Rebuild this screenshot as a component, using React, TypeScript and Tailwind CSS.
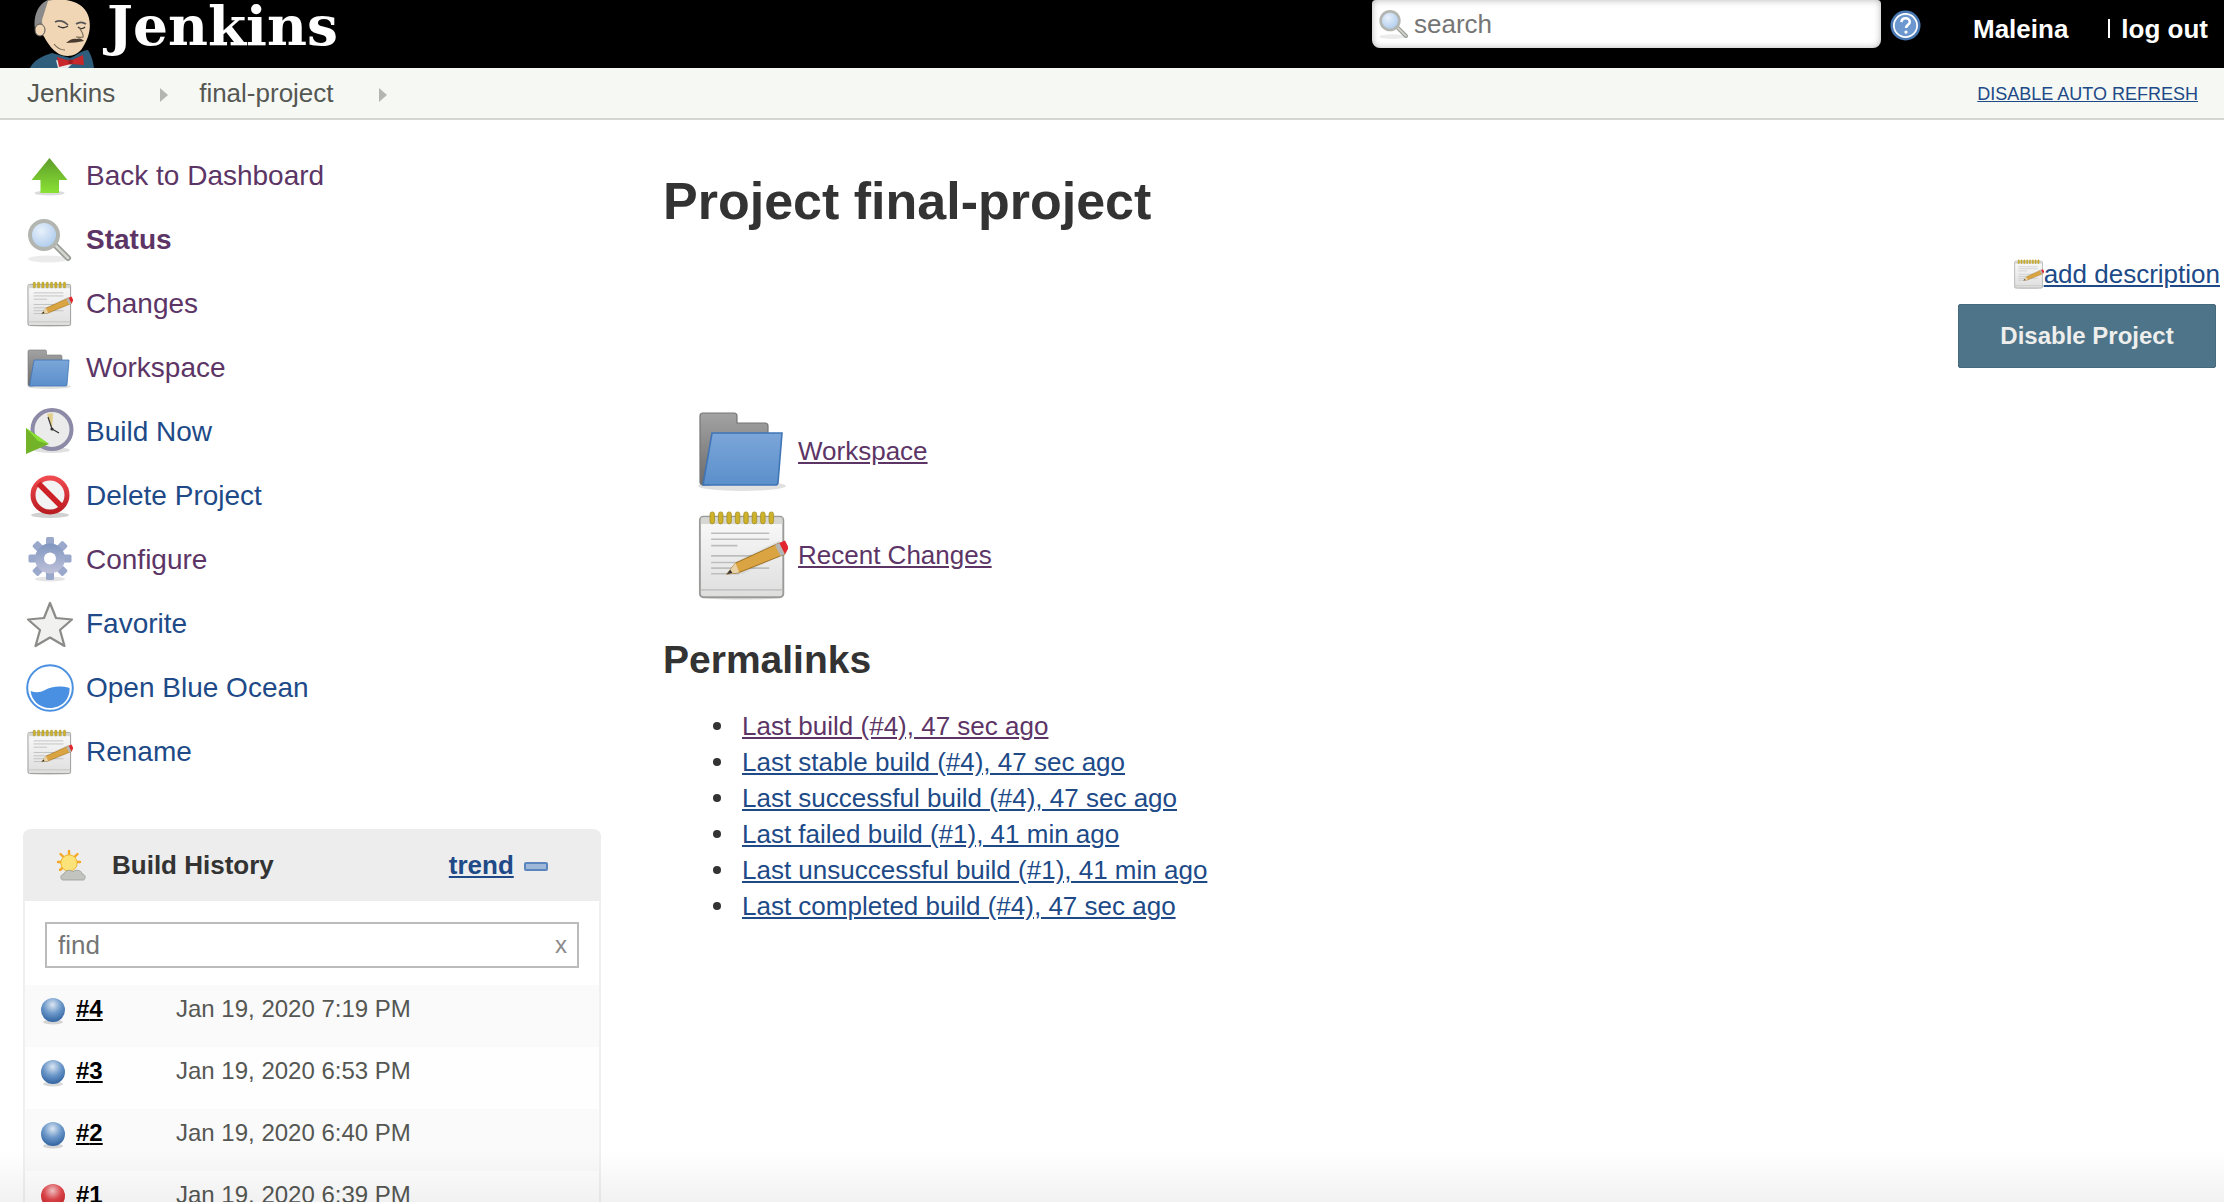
import type { ReactNode } from 'react'

const PURPLE = 'text-[#5c3566]'
const BLUE = 'text-[#204a87]'

function JenkinsHead() {
  return (
    <svg viewBox="0 0 66 68" className="w-[66px] h-[68px] shrink-0">
      <path d="M2 68C6 60 14 56 24 53L42 58C48 56 54 50 60 50C64 56 65 62 66 68Z" fill="#2f5d7c" />
      <path d="M28 60L44 64L40 68H30Z" fill="#e8e8e8" />
      <path d="M8 34C4 20 8 5 20 0H34C25 4 21 12 19 21L17 35Z" fill="#8a8a8a" />
      <path d="M20 1C35-3 55 1 60 15C64 26 61 38 55 47C50 56 39 58 31 54C23 49 19 42 15 35L14 20Z" fill="#f0d6b5" />
      <ellipse cx="12" cy="30" rx="5" ry="6" fill="#f0d6b5" stroke="#555" strokeWidth="1" />
      <path d="M27 22C31 20 36 21 40 25M48 24C51 22 55 22 58 24" stroke="#555" strokeWidth="1.6" fill="none" />
      <path d="M30 26C33 28 37 28 40 26M50 27C52 29 55 29 57 27" stroke="#333" strokeWidth="1.4" fill="none" />
      <path d="M51 27C53 31 56 34 55 37C53 38 50 37 48 37" stroke="#7a6a58" strokeWidth="1.2" fill="none" />
      <path d="M38 43C42 39 46 38 49 39C52 38 54 39 56 41C51 42 44 43 38 43Z" fill="#4a3b30" />
      <path d="M26 44C29 48 33 50 37 50" stroke="#7a6a58" strokeWidth="1.2" fill="none" />
      <path d="M29 57L42 61L55 55L56 65L43 64L31 67Z" fill="#c8272b" />
      <circle cx="42.5" cy="62" r="2.4" fill="#a01c20" />
    </svg>
  )
}

function ArrowUpIcon() {
  return (
    <svg viewBox="0 0 48 48" className="w-12 h-12 shrink-0">
      <defs>
        <linearGradient id="arrowG" x1="0" y1="0" x2="0" y2="1">
          <stop offset="0" stopColor="#5d9c2a" />
          <stop offset="1" stopColor="#8ae234" />
        </linearGradient>
      </defs>
      <ellipse cx="23.5" cy="41" rx="15" ry="2.5" fill="#000" opacity="0.14" />
      <path d="M23.5 6L41.5 28H33V41H14.5V28H5.5Z" fill="url(#arrowG)" />
    </svg>
  )
}

function SearchIcon({ className = 'w-12 h-12' }: { className?: string }) {
  return (
    <svg viewBox="0 0 48 48" className={`${className} shrink-0`}>
      <defs>
        <radialGradient id="lensG" cx="0.4" cy="0.35" r="0.7">
          <stop offset="0" stopColor="#e8f1fb" />
          <stop offset="1" stopColor="#a9c8ec" />
        </radialGradient>
      </defs>
      <ellipse cx="22" cy="43" rx="20" ry="3.5" fill="#000" opacity="0.08" />
      <path d="M29 29L42 42" stroke="#9a9c97" strokeWidth="6" strokeLinecap="round" />
      <path d="M29 29L42 42" stroke="#d3d7cf" strokeWidth="2.5" strokeLinecap="round" />
      <circle cx="18" cy="19" r="14" fill="url(#lensG)" stroke="#b3b6b0" strokeWidth="4" />
    </svg>
  )
}

function NotepadIcon({ className = 'w-12 h-12' }: { className?: string }) {
  return (
    <svg viewBox="0 0 48 48" className={`${className} shrink-0`}>
      <defs>
        <linearGradient id="padG" x1="0" y1="0" x2="0" y2="1">
          <stop offset="0" stopColor="#fafafa" />
          <stop offset="1" stopColor="#dedede" />
        </linearGradient>
      </defs>
      <ellipse cx="23" cy="46.5" rx="20" ry="1.4" fill="#000" opacity="0.12" />
      <rect x="1" y="3.5" width="44.5" height="43" rx="1.8" fill="url(#padG)" stroke="#9a9a98" strokeWidth="1" />
      <rect x="1.5" y="4" width="43.5" height="3.5" fill="#d6d6d3" />
      <path d="M1.5 42.6H45" stroke="#c4c4c2" strokeWidth="1" />
      {[7.6, 12.1, 16.6, 21.1, 25.6, 30.1, 34.6, 39.1].map((x) => (
        <rect key={x} x={x - 1.2} y="1" width="2.4" height="6.4" rx="1.2" fill="#cdb22a" stroke="#9c8718" strokeWidth="0.35" />
      ))}
      <path d="M7 12.4H38M7 15.6H38M7 19H21M7 24.5H38M7 28H25M7 31H38M7 34H22" stroke="#bcbebb" strokeWidth="0.9" />
      <path d="M15.3 34.2L21 27L43 16.5L48 22.5L24 34Z" fill="#000" opacity="0.07" />
      <path d="M15.3 34.2L20 28.3L43.5 17.5L46.5 23.5L22 33.3Z" fill="#d9a441" stroke="#8f5902" strokeWidth="0.4" />
      <path d="M15.3 34.2L20 28.3L22 33.3Z" fill="#e9d2a6" />
      <path d="M15.3 34.2L17.2 31.8L18.4 33.6Z" fill="#333" />
      <path d="M43 17.7L46.4 16.2L48.4 20.2L46.4 23.5Z" fill="#e3262e" />
      <path d="M41 18.7L43.4 17.6L46.3 23.6L44 24.5Z" fill="#b5b5b5" />
    </svg>
  )
}

function FolderIcon({ className = 'w-12 h-12' }: { className?: string }) {
  return (
    <svg viewBox="0 0 48 48" className={`${className} shrink-0`}>
      <defs>
        <linearGradient id="folderBack" x1="0" y1="0" x2="0" y2="1">
          <stop offset="0" stopColor="#a3a3a3" />
          <stop offset="1" stopColor="#6b6b6b" />
        </linearGradient>
        <linearGradient id="folderFront" x1="0" y1="0" x2="0" y2="1">
          <stop offset="0" stopColor="#7ba6d9" />
          <stop offset="1" stopColor="#5b8fcb" />
        </linearGradient>
      </defs>
      <ellipse cx="23" cy="42.5" rx="22" ry="2.5" fill="#000" opacity="0.12" />
      <path d="M2 7.5C2 6.6 2.6 6 3.5 6H19C20 6 20.5 6.6 20.5 7.5V11H34.5C35.4 11 36 11.6 36 12.5V17L7 42H3.5C2.6 42 2 41.4 2 40.5Z" fill="url(#folderBack)" stroke="#757575" strokeWidth="0.6" />
      <path d="M8 16H43L41 40.8C40.9 41.6 40.4 42 39.6 42H3.5Z" fill="url(#folderFront)" stroke="#3f75b5" strokeWidth="0.8" />
    </svg>
  )
}

function BuildNowIcon() {
  return (
    <svg viewBox="0 0 48 48" className="w-12 h-12 shrink-0">
      <ellipse cx="26" cy="42" rx="18" ry="3" fill="#000" opacity="0.12" />
      <circle cx="26" cy="21.5" r="19.5" fill="#ebebeb" stroke="#8c8aa6" strokeWidth="4" />
      <path d="M26 21L21 6L27 5Z" fill="#e2cf8a" />
      <path d="M26 21L22 9M26 21L33 25" stroke="#333" strokeWidth="1.2" />
      <circle cx="26" cy="21" r="1.6" fill="#333" />
      <path d="M0 20L23 36L0 46Z" fill="#73b32a" />
      <path d="M0 20L23 36L12 33Z" fill="#8ae234" />
    </svg>
  )
}

function DeleteIcon() {
  return (
    <svg viewBox="0 0 48 48" className="w-12 h-12 shrink-0">
      <defs>
        <linearGradient id="deleteG" x1="0" y1="0" x2="0" y2="1">
          <stop offset="0" stopColor="#ef4a4f" />
          <stop offset="1" stopColor="#b91d22" />
        </linearGradient>
      </defs>
      <ellipse cx="24" cy="43" rx="19" ry="3" fill="#000" opacity="0.18" />
      <circle cx="24" cy="23" r="17" fill="#f3f3f3" stroke="url(#deleteG)" strokeWidth="5" />
      <path d="M12.5 11.5L35.5 34.5" stroke="#cc2227" strokeWidth="5.5" />
    </svg>
  )
}

function GearIcon() {
  const teeth = [0, 45, 90, 135, 180, 225, 270, 315]
  return (
    <svg viewBox="0 0 48 48" className="w-12 h-12 shrink-0">
      <defs>
        <linearGradient id="gearG" x1="0" y1="0" x2="0" y2="1">
          <stop offset="0" stopColor="#7f96bf" />
          <stop offset="1" stopColor="#c0c2da" />
        </linearGradient>
      </defs>
      <ellipse cx="24" cy="43" rx="15" ry="2.5" fill="#000" opacity="0.1" />
      <g>
        {teeth.map((a) => (
          <rect key={a} x="20" y="1" width="8" height="12" rx="1.5" transform={`rotate(${a} 24 22.5)`} fill="#9aa8cb" />
        ))}
      </g>
      <circle cx="24" cy="22.5" r="15" fill="url(#gearG)" />
      <circle cx="24" cy="22.5" r="6" fill="#fff" />
    </svg>
  )
}

function StarIcon() {
  return (
    <svg viewBox="0 0 48 48" className="w-12 h-12 shrink-0">
      <path d="M24 3L30 18L46 19.5L34 30L38.5 46L24 37.5L9.5 46L14 30L2 19.5L18 18Z" fill="#f1f1ef" stroke="#8a8a88" strokeWidth="2.2" strokeLinejoin="round" />
    </svg>
  )
}

function OceanIcon() {
  return (
    <svg viewBox="0 0 48 48" className="w-12 h-12 shrink-0">
      <circle cx="24" cy="24" r="22.8" fill="#fff" stroke="#4a90e2" strokeWidth="2" />
      <path d="M4.6 27C10 29 14 28.5 19 26C25 23 33 21 43.6 24C44 35 36 44 24 44C13 44 5.5 36 4.6 27Z" fill="#4a90e2" />
    </svg>
  )
}

function Ball({ color }: { color: 'blue' | 'red' }) {
  const id = `ball-${color}`
  return (
    <svg viewBox="0 0 26 28" className="w-[26px] h-[28px] shrink-0 mt-[2px]">
      <defs>
        <radialGradient id={id} cx="0.48" cy="0.28" r="0.75">
          <stop offset="0" stopColor={color === 'blue' ? '#dbe6f2' : '#f7c7c9'} />
          <stop offset="0.5" stopColor={color === 'blue' ? '#6b97c9' : '#e2474c'} />
          <stop offset="1" stopColor={color === 'blue' ? '#2c5f9e' : '#c41f24'} />
        </radialGradient>
      </defs>
      <ellipse cx="13" cy="25" rx="10" ry="2.5" fill="#000" opacity="0.15" />
      <circle cx="13" cy="13" r="12" fill={`url(#${id})`} />
    </svg>
  )
}

function SunCloudIcon() {
  return (
    <svg viewBox="0 0 32 32" className="w-8 h-8 shrink-0">
      <g stroke="#f5a623" strokeWidth="2.4" strokeLinecap="round">
        <path d="M14 2V7M3 13H7M5.5 5L9 8.5M22.5 5L19 8.5M25 13H21M5 21L8.5 18" />
      </g>
      <circle cx="14" cy="14" r="8.2" fill="#fbe37a" stroke="#f0b429" strokeWidth="1" />
      <path d="M8 31C5 31 5 25 9 25C10 21 16 20 18 23C20 20 27 21 27 25C31 25 31 31 28 31Z" fill="#c2c4c0" stroke="#9a9c98" strokeWidth="0.8" />
    </svg>
  )
}

function HelpIcon() {
  return (
    <svg viewBox="0 0 32 32" className="w-[31px] h-[31px] shrink-0">
      <circle cx="16" cy="16" r="15.5" fill="#4a78b5" />
      <circle cx="16" cy="16" r="12" fill="#6d98cf" stroke="#fff" strokeWidth="1.8" />
      <path d="M11.8 12.5C12 9.8 14 8.6 16.2 8.6C18.6 8.6 20.4 10.2 20.4 12.3C20.4 15.2 16.6 15.4 16.6 18.6" stroke="#fff" strokeWidth="2.6" fill="none" />
      <circle cx="16.5" cy="22.8" r="1.7" fill="#fff" />
    </svg>
  )
}

function Crumb({ label, gap }: { label: string; gap: string }) {
  return (
    <>
      <span className="text-[26px] leading-[30px] text-[#555753]">{label}</span>
      <span className={`ml-[45px] ${gap} mt-[4px] w-0 h-0 border-y-[7px] border-y-transparent border-l-[8px] border-l-[#b4b6b2]`} />
    </>
  )
}

function TaskRow({ icon, label, color, bold }: { icon: ReactNode; label: string; color: string; bold?: boolean }) {
  return (
    <div className="flex items-center h-16">
      {icon}
      <a className={`ml-[12px] text-[28px] leading-8 ${color} ${bold ? 'font-bold' : ''}`}>{label}</a>
    </div>
  )
}

function HistoryRow({ no, date, color, odd }: { no: number; date: string; color: 'blue' | 'red'; odd: boolean }) {
  return (
    <div className={`flex items-start h-[62px] pl-[15px] pt-[10px] shrink-0 ${odd ? 'bg-[#fafafa]' : 'bg-[#fefefe]'}`}>
      <Ball color={color} />
      <a className="ml-[10px] w-[100px] text-[24px] leading-[28px] font-bold underline text-black">#{no}</a>
      <span className="text-[24px] leading-[28px] text-[#555753]">{date}</span>
    </div>
  )
}

const permalinks = [
  { text: 'Last build (#4), 47 sec ago', color: PURPLE },
  { text: 'Last stable build (#4), 47 sec ago', color: BLUE },
  { text: 'Last successful build (#4), 47 sec ago', color: BLUE },
  { text: 'Last failed build (#1), 41 min ago', color: BLUE },
  { text: 'Last unsuccessful build (#1), 41 min ago', color: BLUE },
  { text: 'Last completed build (#4), 47 sec ago', color: BLUE },
]

export default function App() {
  return (
    <div className="relative h-[1202px] overflow-hidden bg-white font-['Liberation_Sans',Arial,sans-serif] text-[#333]">
      {/* 顶部 */}
      <header className="flex items-start h-[68px] bg-black overflow-hidden">
        <div className="ml-[28px]">
          <JenkinsHead />
        </div>
        <span className="ml-[13px] text-[55px] leading-[52px] font-bold text-white font-['DejaVu_Serif',serif]">Jenkins</span>
        <div className="ml-auto flex items-center gap-[4px] w-[509px] h-[48px] pl-[6px] rounded-b-lg rounded-t-sm bg-white shadow-[inset_0_0_7px_rgba(0,0,0,0.3)]">
          <SearchIcon className="w-8 h-8" />
          <span className="text-[26px] leading-[30px] text-[#757575]">search</span>
        </div>
        <div className="ml-[9px] mt-[10px]">
          <HelpIcon />
        </div>
        <a className="ml-[52px] mt-[14px] text-[26px] leading-[30px] font-bold text-white">Maleina</a>
        <span className="ml-[40px] mt-[19px] w-[2px] h-[19px] bg-white" />
        <a className="ml-[11px] mr-[16px] mt-[14px] text-[26px] leading-[30px] font-bold text-white">log out</a>
      </header>

      {/* 面包屑 */}
      <nav className="flex items-center h-[52px] pl-[27px] pr-[26px] bg-[#f6f8f3] border-b-2 border-[#d3d7cf]">
        <Crumb label="Jenkins" gap="mr-[31px]" />
        <Crumb label="final-project" gap="mr-0" />
        <a className={`ml-auto mt-[2px] text-[18px] underline ${BLUE}`}>DISABLE AUTO REFRESH</a>
      </nav>

      <div className="flex">
        {/* 侧边栏 */}
        <aside className="w-[663px] shrink-0">
          <div className="pl-[26px] pt-[24px]">
            <TaskRow icon={<ArrowUpIcon />} label="Back to Dashboard" color={PURPLE} />
            <TaskRow icon={<SearchIcon />} label="Status" color={PURPLE} bold />
            <TaskRow icon={<NotepadIcon className="w-[46px] h-[46px] mx-[1px]" />} label="Changes" color={PURPLE} />
            <TaskRow icon={<FolderIcon />} label="Workspace" color={PURPLE} />
            <TaskRow icon={<BuildNowIcon />} label="Build Now" color={BLUE} />
            <TaskRow icon={<DeleteIcon />} label="Delete Project" color={BLUE} />
            <TaskRow icon={<GearIcon />} label="Configure" color={PURPLE} />
            <TaskRow icon={<StarIcon />} label="Favorite" color={BLUE} />
            <TaskRow icon={<OceanIcon />} label="Open Blue Ocean" color={BLUE} />
            <TaskRow icon={<NotepadIcon className="w-[46px] h-[46px] mx-[1px]" />} label="Rename" color={BLUE} />
          </div>

          {/* 构建历史 */}
          <section className="ml-[23px] mt-[45px] w-[578px] rounded-t-lg border-x-2 border-[#f0f0f0]">
            <div className="flex items-center h-[72px] -mx-[2px] pl-[32px] rounded-t-lg bg-[#ededed]">
              <SunCloudIcon />
              <h3 className="ml-[25px] text-[26px] font-bold text-[#333]">Build History</h3>
              <a className={`ml-[175px] text-[26px] font-bold underline ${BLUE}`}>trend</a>
              <span className="ml-[10px] mt-[2px] w-[24px] h-[9px] rounded-[2px] bg-[#9db8d9] border-2 border-[#5b86bd]" />
            </div>
            <div className="flex items-center justify-between mx-[20px] mt-[21px] mb-[17px] h-[46px] w-[534px] pl-[11px] pr-[10px] border-2 border-[#bbb]">
              <span className="text-[26px] text-[#757575]">find</span>
              <span className="text-[24px] text-[#8a8a8a]">x</span>
            </div>
            <div className="flex flex-col">
              <HistoryRow no={4} date="Jan 19, 2020 7:19 PM" color="blue" odd />
              <HistoryRow no={3} date="Jan 19, 2020 6:53 PM" color="blue" odd={false} />
              <HistoryRow no={2} date="Jan 19, 2020 6:40 PM" color="blue" odd />
              <HistoryRow no={1} date="Jan 19, 2020 6:39 PM" color="red" odd={false} />
            </div>
          </section>
        </aside>

        {/* 主内容 */}
        <main className="flex-1 min-w-0 pt-[51px]">
          <h1 className="text-[52px] leading-[60px] font-bold text-[#333]">Project final-project</h1>
          <div className="mt-[26px] flex justify-end items-center pr-[4px] h-[34px]">
            <NotepadIcon className="w-[30px] h-[30px]" />
            <a className={`text-[26px] underline ${BLUE}`}>add description</a>
          </div>
          <div className="mt-[13px] flex justify-end pr-[8px]">
            <button className="w-[258px] h-[64px] bg-[#4d7489] border border-[#46697c] rounded-[2px] text-[24px] font-bold text-[#eeeeec]">
              Disable Project
            </button>
          </div>

          <div className="mt-[29px] pl-[33px]">
            <div className="flex items-center h-[104px]">
              <FolderIcon className="w-24 h-24" />
              <a className={`ml-[6px] mt-[4px] text-[26px] underline ${PURPLE}`}>Workspace</a>
            </div>
            <div className="flex items-center h-[104px]">
              <NotepadIcon className="w-[90px] h-[90px] ml-[2px] mt-[4px]" />
              <a className={`ml-[10px] mt-[4px] text-[26px] underline ${PURPLE}`}>Recent Changes</a>
            </div>
          </div>

          <h2 className="mt-[32px] text-[39px] leading-[46px] font-bold text-[#333]">Permalinks</h2>
          <ul className="mt-[25px] pl-[50px]">
            {permalinks.map((p) => (
              <li key={p.text} className="flex items-center text-[26px] leading-[36px]">
                <span className="w-2 h-2 mr-[21px] rounded-full bg-[#333]" />
                <a className={`underline ${p.color}`}>{p.text}</a>
              </li>
            ))}
          </ul>
        </main>
      </div>

      {/* 底部渐变 */}
      <div className="absolute inset-x-0 bottom-0 h-[52px] bg-gradient-to-b from-transparent to-[rgba(0,0,0,0.05)] pointer-events-none" />
    </div>
  )
}
